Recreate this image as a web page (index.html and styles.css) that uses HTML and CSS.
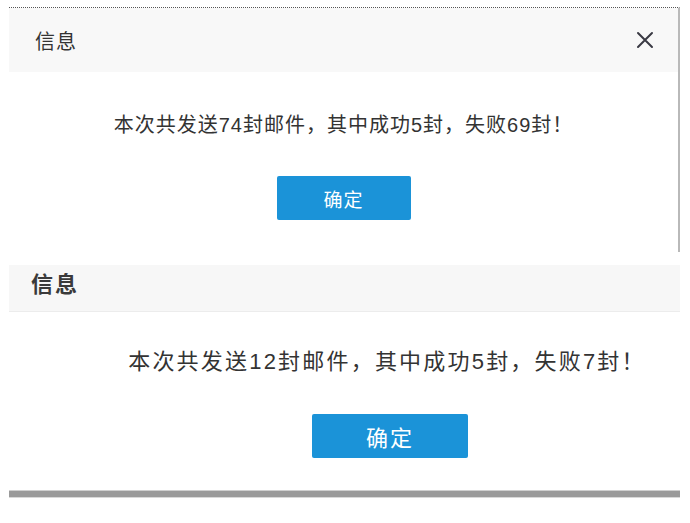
FILE: index.html
```html
<!DOCTYPE html>
<html lang="zh-CN">
<head>
<meta charset="utf-8">
<title>信息</title>
<link rel="stylesheet" href="styles.css">
</head>
<body>
<div class="page">
  <section class="shot shot-one">
    <header class="head head-one">
      <span class="title">信息</span>
      <svg class="close" width="18" height="18" viewBox="0 0 18 18" aria-hidden="true">
        <path d="M2 2 L16 16 M16 2 L2 16" stroke="#3a3a44" stroke-width="2" stroke-linecap="round" fill="none"/>
      </svg>
    </header>
    <div class="body body-one">
      <p class="msg msg-one">本次共发送74封邮件，其中成功5封，失败69封！</p>
      <button class="ok ok-one">确定</button>
    </div>
  </section>
  <section class="shot shot-two">
    <header class="head head-two">
      <span class="title title-two">信息</span>
    </header>
    <div class="body body-two">
      <p class="msg msg-two">本次共发送12封邮件，其中成功5封，失败7封！</p>
      <button class="ok ok-two">确定</button>
    </div>
    <div class="bar"></div>
  </section>
</div>
</body>
</html>
```

FILE: styles.css
```css
* { box-sizing: border-box; }
html, body { margin: 0; padding: 0; background: #ffffff; }
body {
  font-family: "Liberation Sans", "Noto Sans CJK SC", sans-serif;
  color: #333333;
}
.page {
  display: flex;
  flex-direction: column;
  padding: 7px 0 0 9px;
}
.shot { width: 671px; }
.shot-one {
  height: 245px;
  border-top: 1px dotted #555555;
  border-right: 2px solid #b9b9b9;
}
.head {
  display: flex;
  align-items: center;
  justify-content: space-between;
  background: #f8f8f8;
}
.head-one {
  height: 64px;
  padding: 0 24px 0 26px;
}
.title {
  font-size: 20px;
  letter-spacing: 1px;
  color: #333333;
}
.close { display: block; }
.body {
  display: flex;
  flex-direction: column;
  align-items: center;
}
.msg { margin: 0; color: #333333; white-space: nowrap; }
.body-one { padding-top: 41px; }
.msg-one {
  font-size: 20px;
  line-height: 24px;
  letter-spacing: 1px;
}
.ok {
  border: none;
  border-radius: 2px;
  background: #1b93d8;
  color: #ffffff;
  font-family: "Liberation Sans", "Noto Sans CJK SC", sans-serif;
  padding: 0;
}
.ok-one {
  margin-top: 39px;
  width: 134px;
  height: 44px;
  font-size: 19px;
  letter-spacing: 1px;
}
.shot-two { margin-top: 13px; }
.head-two {
  height: 47px;
  padding: 0 0 12px 22px;
  background: #f7f7f7;
  border-bottom: 1px solid #ececec;
}
.title-two {
  font-size: 22px;
  font-weight: 600;
  letter-spacing: 2px;
  color: #3a3a3a;
}
.body-two {
  padding-left: 85px;
  padding-top: 36px;
}
.msg-two {
  font-size: 22px;
  line-height: 28px;
  letter-spacing: 2.2px;
}
.ok-two {
  margin-top: 38px;
  margin-left: 6px;
  width: 156px;
  height: 44px;
  font-size: 22px;
  letter-spacing: 2px;
}
.bar {
  margin-top: 32px;
  height: 8px;
  background: #9a9a9a;
  border-top: 1px solid #cfcfcf;
  border-bottom: 1px solid #d8d8d8;
}
```
